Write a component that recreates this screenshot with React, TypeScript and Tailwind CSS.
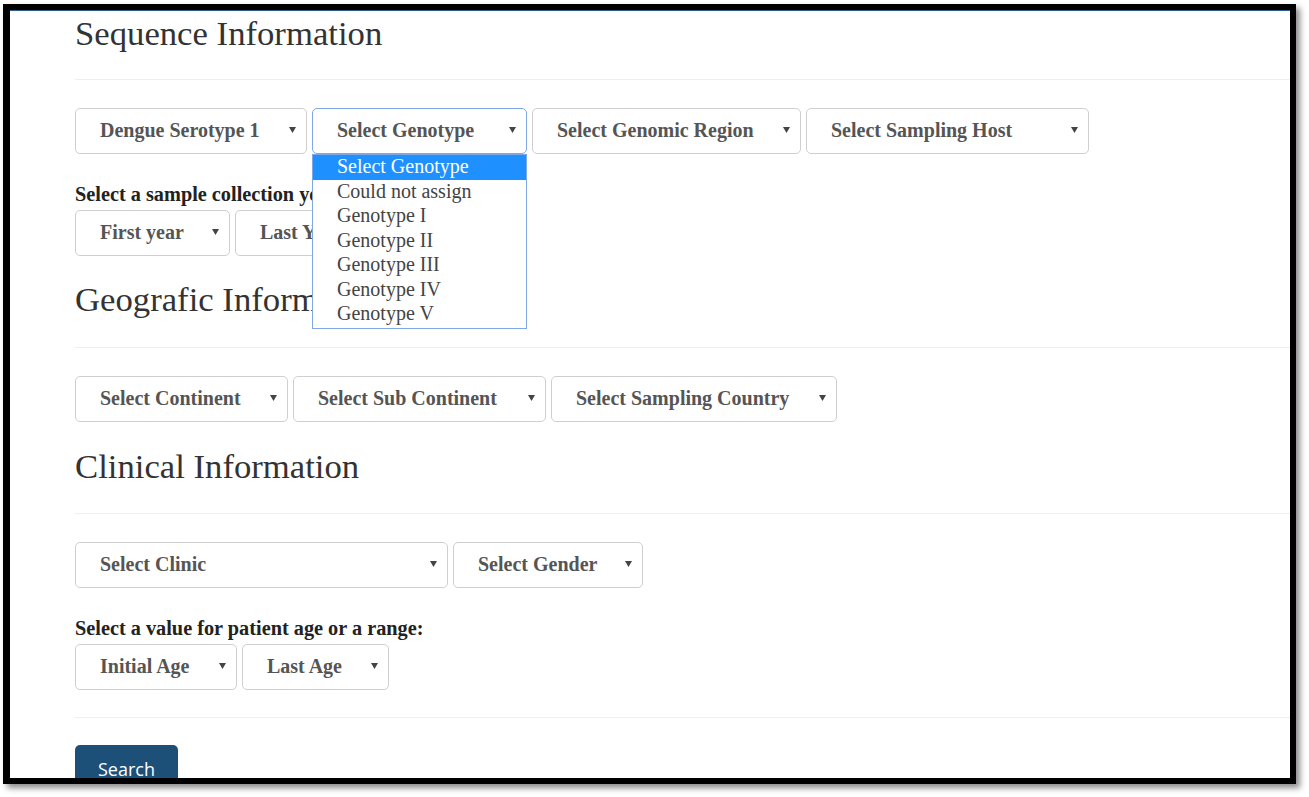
import type { ReactNode } from 'react'

const SERIF = { fontFamily: '"Liberation Serif", "Times New Roman", serif' }

const GENOTYPES = [
  'Select Genotype',
  'Could not assign',
  'Genotype I',
  'Genotype II',
  'Genotype III',
  'Genotype IV',
  'Genotype V',
]

function Caret() {
  return (
    <svg width="7" height="6" viewBox="0 0 7 6" className="shrink-0">
      <path d="M0 0 H7 L3.5 6 Z" fill="#444" />
    </svg>
  )
}

function Select({
  label,
  width,
  focused = false,
  children,
}: {
  label: string
  width: string
  focused?: boolean
  children?: ReactNode
}) {
  return (
    <div className={`relative shrink-0 ${width}`}>
      <div
        className={`flex h-[46px] items-center justify-between rounded-[5px] border bg-white pb-[2px] pl-[24px] pr-[10px] ${
          focused ? 'border-[#7fa7e3]' : 'border-[#cfcfcf]'
        }`}
      >
        <span className="text-[20px] font-bold leading-[24px] text-[#555]">{label}</span>
        <Caret />
      </div>
      {children}
    </div>
  )
}

function SectionTitle({ children, className }: { children: ReactNode; className: string }) {
  return <h2 className={`text-[34.7px] leading-[40px] font-normal text-[#333] ${className}`}>{children}</h2>
}

function Rule({ className }: { className: string }) {
  return <div className={`h-px bg-[#eeeeee] ${className}`} />
}

export default function App() {
  return (
    <div className="h-[797px] w-full overflow-hidden bg-white pl-[3px] pt-[4px]" style={SERIF}>
      <div className="h-[780px] w-[1293px] overflow-hidden border-b-[6px] border-l-[7px] border-r-[6px] border-t-[6px] border-black bg-white shadow-[4px_4px_6px_rgba(0,0,0,0.45)]">
        <div className="h-px bg-[#2d5e8b]" />
        <div className="pl-[65px]">
          {/* Sequence */}
          <SectionTitle className="mt-[3px]">Sequence Information</SectionTitle>
          <Rule className="mt-[25px]" />
          <div className="mt-[28px] flex gap-[5px]">
            <Select label="Dengue Serotype 1" width="w-[232px]" />
            <Select label="Select Genotype" width="w-[215px] z-10" focused>
              <div className="absolute left-0 top-full w-full border border-[#7fa7e3] bg-white pb-[1px]">
                {GENOTYPES.map((g, i) => (
                  <div
                    key={g}
                    className={`h-[24.5px] pl-[24px] text-[20px] leading-[23px] ${
                      i === 0 ? 'bg-[#1e90ff] text-white' : 'text-[#444]'
                    }`}
                  >
                    {g}
                  </div>
                ))}
              </div>
            </Select>
            <Select label="Select Genomic Region" width="w-[269px]" />
            <Select label="Select Sampling Host" width="w-[283px]" />
          </div>
          <p className="mt-[28px] text-[20.3px] font-bold leading-[24px] text-[#222]">
            Select a sample collection year or a range:
          </p>
          <div className="mt-[4px] flex gap-[5px]">
            <Select label="First year" width="w-[155px]" />
            <Select label="Last Year" width="w-[155px]" />
          </div>

          {/* Geographic */}
          <SectionTitle className="mt-[24px]">Geografic Information</SectionTitle>
          <Rule className="mt-[27px]" />
          <div className="mt-[28px] flex gap-[5px]">
            <Select label="Select Continent" width="w-[213px]" />
            <Select label="Select Sub Continent" width="w-[253px]" />
            <Select label="Select Sampling Country" width="w-[286px]" />
          </div>

          {/* Clinical */}
          <SectionTitle className="mt-[25px]">Clinical Information</SectionTitle>
          <Rule className="mt-[26px]" />
          <div className="mt-[28px] flex gap-[5px]">
            <Select label="Select Clinic" width="w-[373px]" />
            <Select label="Select Gender" width="w-[190px]" />
          </div>
          <p className="mt-[28px] text-[20.3px] font-bold leading-[24px] text-[#222]">
            Select a value for patient age or a range:
          </p>
          <div className="mt-[4px] flex gap-[5px]">
            <Select label="Initial Age" width="w-[162px]" />
            <Select label="Last Age" width="w-[147px]" />
          </div>

          <Rule className="mt-[27px]" />
          <button
            className="mt-[27px] h-[46px] w-[103px] rounded-[5px] bg-[#1d5079] pt-[1px] text-[18px] leading-[24px] text-white"
            style={{ fontFamily: '"Open Sans", "Noto Sans", sans-serif' }}
          >
            Search
          </button>
        </div>
      </div>
    </div>
  )
}
